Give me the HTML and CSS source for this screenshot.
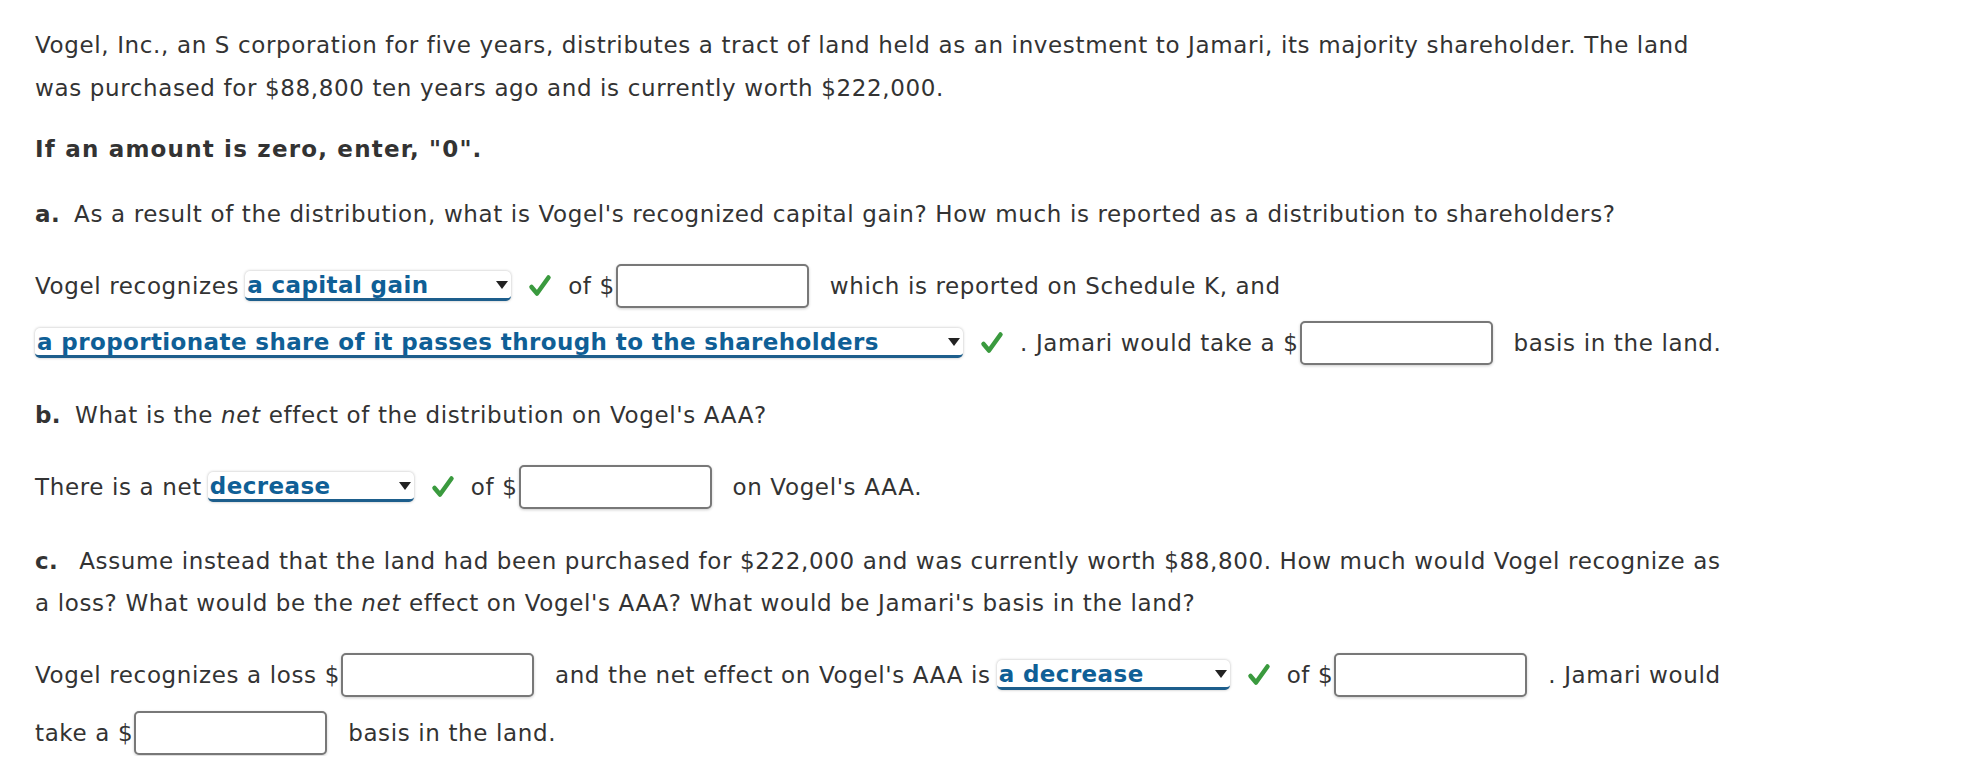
FILE: index.html
```html
<!DOCTYPE html>
<html>
<head>
<meta charset="utf-8">
<link rel="stylesheet" href="styles.css">
</head>
<body>
<div class="page">
  <p class="para intro">Vogel, Inc., an S corporation for five years, distributes a tract of land held as an investment to Jamari, its majority shareholder. The land was purchased for $88,800 ten years ago and is currently worth $222,000.</p>
  <p class="para note">If an amount is zero, enter, "0".</p>

  <p class="para q qa"><b class="lbl">a.</b>As a result of the distribution, what is Vogel's recognized capital gain? How much is reported as a distribution to shareholders?</p>

  <div class="row r1">
    <span class="txt">Vogel recognizes</span>
    <span class="dd w266"><span class="dd-text">a capital gain</span><span class="caret"></span></span>
    <span class="check"><svg viewBox="0 0 24 24" width="24" height="24"><path d="M3.5 13 L9 19.5 L20.5 3.5" fill="none" stroke="#3a9a3e" stroke-width="4.5" stroke-linecap="round" stroke-linejoin="round"/></svg></span>
    <span class="txt">of $</span><span class="inp"></span>
    <span class="txt after">which is reported on Schedule K, and</span>
  </div>
  <div class="row r2">
    <span class="dd w928 first"><span class="dd-text">a proportionate share of it passes through to the shareholders</span><span class="caret"></span></span>
    <span class="check"><svg viewBox="0 0 24 24" width="24" height="24"><path d="M3.5 13 L9 19.5 L20.5 3.5" fill="none" stroke="#3a9a3e" stroke-width="4.5" stroke-linecap="round" stroke-linejoin="round"/></svg></span>
    <span class="txt">. Jamari would take a $</span><span class="inp"></span>
    <span class="txt after">basis in the land.</span>
  </div>

  <p class="para q qb"><b class="lbl">b.</b>What is the <i>net</i> effect of the distribution on Vogel's AAA?</p>

  <div class="row rb">
    <span class="txt">There is a net</span>
    <span class="dd w206"><span class="dd-text">decrease</span><span class="caret"></span></span>
    <span class="check"><svg viewBox="0 0 24 24" width="24" height="24"><path d="M3.5 13 L9 19.5 L20.5 3.5" fill="none" stroke="#3a9a3e" stroke-width="4.5" stroke-linecap="round" stroke-linejoin="round"/></svg></span>
    <span class="txt">of $</span><span class="inp"></span>
    <span class="txt after">on Vogel's AAA.</span>
  </div>

  <p class="para q qc"><b class="lbl lblc">c.</b>Assume instead that the land had been purchased for $222,000 and was currently worth $88,800. How much would Vogel recognize as a loss? What would be the <i>net</i> effect on Vogel's AAA? What would be Jamari's basis in the land?</p>

  <div class="row rc1">
    <span class="txt">Vogel recognizes a loss $</span><span class="inp"></span>
    <span class="txt after">and the net effect on Vogel's AAA is</span>
    <span class="dd w233"><span class="dd-text">a decrease</span><span class="caret"></span></span>
    <span class="check"><svg viewBox="0 0 24 24" width="24" height="24"><path d="M3.5 13 L9 19.5 L20.5 3.5" fill="none" stroke="#3a9a3e" stroke-width="4.5" stroke-linecap="round" stroke-linejoin="round"/></svg></span>
    <span class="txt">of $</span><span class="inp"></span>
    <span class="txt after">. Jamari would</span>
  </div>
  <div class="row rc2">
    <span class="txt">take a $</span><span class="inp"></span>
    <span class="txt after">basis in the land.</span>
  </div>
</div>
</body>
</html>
```
FILE: styles.css
```css
html, body {
  margin: 0;
  padding: 0;
  background: #ffffff;
}
.page {
  padding: 24px 0 0 35px;
  font-family: "DejaVu Sans", Verdana, sans-serif;
  font-size: 23px;
  letter-spacing: 0.63px;
  color: #333333;
  width: 1690px;
}
.para {
  margin: 0;
  line-height: 43px;
}
.note {
  margin-top: 18px;
  font-weight: bold;
  letter-spacing: 1.2px;
}
.qa { margin-top: 22px; }
.qb { margin-top: 28px; }
.qc { margin-top: 30px; line-height: 42px; }
.lbl {
  font-weight: bold;
  letter-spacing: 0.4px;
  margin-right: 14px;
}
.lblc { margin-right: 21px; }
.row {
  display: flex;
  align-items: center;
  height: 46px;
  white-space: nowrap;
}
.row > * { flex-shrink: 0; }
.r1 { margin-top: 27px; }
.r2 { margin-top: 11px; }
.rb { margin-top: 27px; }
.rc1 { margin-top: 28px; }
.rc2 { margin-top: 12px; }
.txt { display: inline-block; }
.after { margin-left: 21px; }
.dd {
  display: inline-flex;
  align-items: center;
  justify-content: space-between;
  box-sizing: border-box;
  height: 30px;
  margin-left: 6px;
  padding: 0 3px 0 2px;
  background: #fff;
  border-radius: 5px;
  border-bottom: 3px solid #1d5e8c;
  box-shadow: 0 0 3px rgba(0, 0, 0, 0.28);
  color: #0f5f96;
  font-weight: bold;
  letter-spacing: 0.4px;
}
.dd.first { margin-left: 0; }
.dd-text { line-height: 26px; }
.caret {
  width: 0;
  height: 0;
  border-left: 6px solid transparent;
  border-right: 6px solid transparent;
  border-top: 8px solid #222;
  margin-left: 10px;
}
.w266 { width: 266px; }
.w928 { width: 928px; }
.w206 { width: 206px; }
.w233 { width: 233px; }
.check {
  display: inline-flex;
  margin: 0 16px 0 17px;
}
.inp {
  display: inline-block;
  box-sizing: border-box;
  width: 193px;
  height: 44px;
  margin-left: 1px;
  border: 2px solid #787878;
  border-radius: 5px;
  background: #fff;
  box-shadow: 0 1px 3px rgba(0, 0, 0, 0.2);
}
```
